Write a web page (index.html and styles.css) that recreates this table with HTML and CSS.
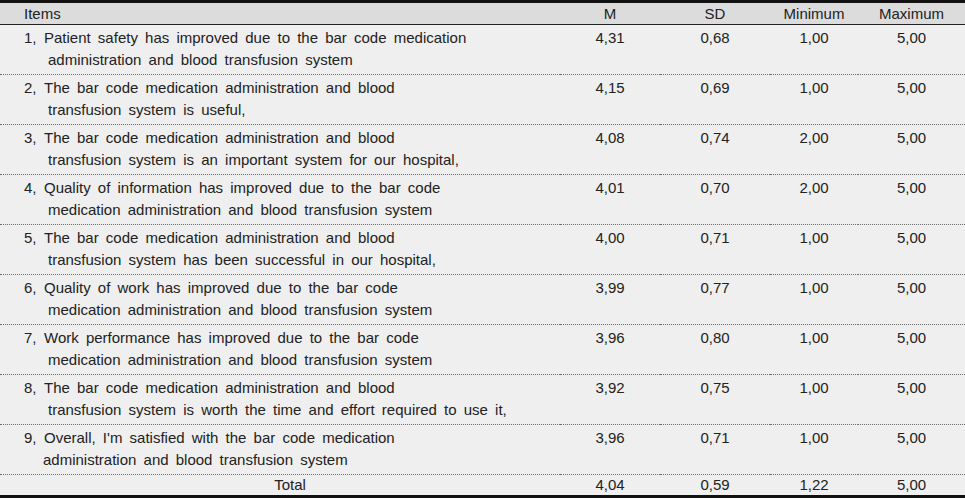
FILE: index.html
```html
<!DOCTYPE html>
<html lang="en">
<head>
<meta charset="utf-8">
<title>Items</title>
<link rel="stylesheet" href="styles.css">
</head>
<body>
<table class="stats">
  <colgroup>
    <col class="c-item"><col class="c-m"><col class="c-sd"><col class="c-min"><col class="c-max">
  </colgroup>
  <thead>
    <tr><th class="h-item">Items</th><th>M</th><th>SD</th><th>Minimum</th><th>Maximum</th></tr>
  </thead>
  <tbody>
    <tr><td class="item"><span class="num">1,</span><span class="txt">Patient safety has improved due to the bar code medication<br><span class="cont">administration and blood transfusion system</span></span></td><td>4,31</td><td>0,68</td><td>1,00</td><td>5,00</td></tr>
    <tr><td class="item"><span class="num">2,</span><span class="txt">The bar code medication administration and blood<br><span class="cont">transfusion system is useful,</span></span></td><td>4,15</td><td>0,69</td><td>1,00</td><td>5,00</td></tr>
    <tr><td class="item"><span class="num">3,</span><span class="txt">The bar code medication administration and blood<br><span class="cont">transfusion system is an important system for our hospital,</span></span></td><td>4,08</td><td>0,74</td><td>2,00</td><td>5,00</td></tr>
    <tr><td class="item"><span class="num">4,</span><span class="txt">Quality of information has improved due to the bar code<br><span class="cont">medication administration and blood transfusion system</span></span></td><td>4,01</td><td>0,70</td><td>2,00</td><td>5,00</td></tr>
    <tr><td class="item"><span class="num">5,</span><span class="txt">The bar code medication administration and blood<br><span class="cont">transfusion system has been successful in our hospital,</span></span></td><td>4,00</td><td>0,71</td><td>1,00</td><td>5,00</td></tr>
    <tr><td class="item"><span class="num">6,</span><span class="txt">Quality of work has improved due to the bar code<br><span class="cont">medication administration and blood transfusion system</span></span></td><td>3,99</td><td>0,77</td><td>1,00</td><td>5,00</td></tr>
    <tr><td class="item"><span class="num">7,</span><span class="txt">Work performance has improved due to the bar code<br><span class="cont">medication administration and blood transfusion system</span></span></td><td>3,96</td><td>0,80</td><td>1,00</td><td>5,00</td></tr>
    <tr><td class="item"><span class="num">8,</span><span class="txt">The bar code medication administration and blood<br><span class="cont">transfusion system is worth the time and effort required to use it,</span></span></td><td>3,92</td><td>0,75</td><td>1,00</td><td>5,00</td></tr>
    <tr><td class="item"><span class="num">9,</span><span class="txt">Overall, I'm satisfied with the bar code medication<br><span class="cont cont-9">administration and blood transfusion system</span></span></td><td>3,96</td><td>0,71</td><td>1,00</td><td>5,00</td></tr>
  </tbody>
  <tfoot>
    <tr><td class="total">Total</td><td>4,04</td><td>0,59</td><td>1,22</td><td>5,00</td></tr>
  </tfoot>
</table>
</body>
</html>
```
FILE: styles.css
```css
html, body {
  margin: 0;
  padding: 0;
  background: #ffffff;
}
body {
  width: 965px;
  font-family: "Liberation Sans", Arial, sans-serif;
  font-size: 15px;
  color: #222222;
}
.stats {
  width: 965px;
  border-collapse: collapse;
  table-layout: fixed;
  border-top: 3px solid #111111;
  border-bottom: 3px solid #111111;
}
.c-item { width: 560px; }
.c-m { width: 100px; }
.c-sd { width: 110px; }
.c-min { width: 88px; }
.c-max { width: 107px; }

thead th {
  background: #dcdcdc;
  font-weight: normal;
  height: 21px;
  padding: 0;
  line-height: 21px;
  text-align: center;
  border-bottom: 1px solid #222222;
}
thead th.h-item {
  text-align: left;
  padding-left: 24px;
}
tbody td, tfoot td {
  background: #efefef;
  padding: 0;
  text-align: center;
  vertical-align: top;
  line-height: 22px;
}
tbody td {
  height: 49px;
  padding-top: 2px;
  box-sizing: border-box;
  border-bottom: 1px dotted #6a6a6a;
}
tbody tr td {
  height: 50px;
}
td.item {
  text-align: left;
  padding-left: 24px;
  word-spacing: 3px;
  white-space: nowrap;
}
.num {
  display: inline-block;
  width: 20px;
}
.txt {
  display: inline;
}
.cont {
  display: inline-block;
  padding-left: 24px;
}
.cont-9 {
  padding-left: 19px;
}
tfoot td {
  height: 20px;
  line-height: 20px;
  vertical-align: middle;
}
tfoot td.total {
  text-align: center;
  padding-left: 20px;
}
```
